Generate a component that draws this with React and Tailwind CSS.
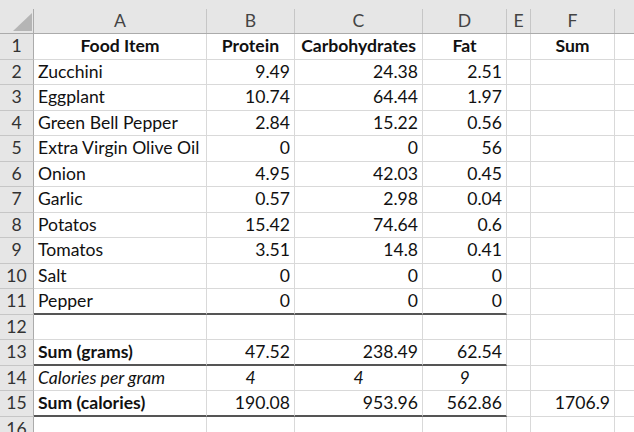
import React from 'react';

const widths = ['w-[34px]', 'w-[173px]', 'w-[88px]', 'w-[128px]', 'w-[84px]', 'w-[24px]', 'w-[84px]', 'w-[40px]'];
const letters = ['A', 'B', 'C', 'D', 'E', 'F', ''];

const rows = [
    { label: 'Food Item', vals: ['Protein', 'Carbohydrates', 'Fat'], f: 'Sum', kind: 'head' },
    { label: 'Zucchini', vals: ['9.49', '24.38', '2.51'] },
    { label: 'Eggplant', vals: ['10.74', '64.44', '1.97'] },
    { label: 'Green Bell Pepper', vals: ['2.84', '15.22', '0.56'] },
    { label: 'Extra Virgin Olive Oil', vals: ['0', '0', '56'] },
    { label: 'Onion', vals: ['4.95', '42.03', '0.45'] },
    { label: 'Garlic', vals: ['0.57', '2.98', '0.04'] },
    { label: 'Potatos', vals: ['15.42', '74.64', '0.6'] },
    { label: 'Tomatos', vals: ['3.51', '14.8', '0.41'] },
    { label: 'Salt', vals: ['0', '0', '0'] },
    { label: 'Pepper', vals: ['0', '0', '0'], thick: true },
    { label: '', vals: ['', '', ''] },
    { label: 'Sum (grams)', vals: ['47.52', '238.49', '62.54'], kind: 'bold', thick: true },
    { label: 'Calories per gram', vals: ['4', '4', '9'], kind: 'italic' },
    { label: 'Sum (calories)', vals: ['190.08', '953.96', '562.86'], f: '1706.9', kind: 'bold', thick: true },
    { label: '', vals: ['', '', ''] },
];

function Cell({ w, className = '', children }) {
    return (
        <div className={`${w} shrink-0 h-full flex items-center border-r border-[#d9d9d9] px-[4px] whitespace-nowrap overflow-hidden ${className}`}>
            {children}
        </div>
    );
}

export default function App() {
    return (
        <div className="w-[634px] h-[432px] overflow-hidden bg-white text-[#111] text-[17.6px]" style={{ fontFamily: 'Lato, "Open Sans", sans-serif' }}>
            <div className="h-[9px] bg-[#e6e6e6]" />
            <div className="flex h-[25px] bg-[#e6e6e6] border-b border-[#ababab] text-[#444]">
                <div className="w-[34px] shrink-0 h-full border-r border-[#ababab] relative">
                    <div className="absolute left-[13px] top-[4px] w-0 h-0 border-l-[19px] border-l-transparent border-b-[18px] border-b-[#b5b5b5]" />
                </div>
                {letters.map((l, i) => (
                    <div key={i} className={`${widths[i + 1]} shrink-0 h-full flex items-center justify-center border-r border-[#c6c6c6]`}>
                        {l}
                    </div>
                ))}
            </div>
            {rows.map((r, i) => {
                const thick = r.thick ? 'border-b-2 border-b-[#555]' : 'border-b border-b-[#d9d9d9]';
                const style = r.kind === 'head' || r.kind === 'bold' ? 'font-bold' : r.kind === 'italic' ? 'italic' : '';
                const numAlign = r.kind === 'head' || r.kind === 'italic' ? 'justify-center' : 'justify-end';
                const numStyle = r.kind === 'head' ? 'font-bold' : r.kind === 'italic' ? 'italic' : '';
                return (
                    <div key={i} className="flex h-[25.5px]">
                        <div className="w-[34px] shrink-0 h-full flex items-center justify-center bg-[#e6e6e6] border-r border-[#ababab] border-b border-b-[#c6c6c6] text-[#333]">
                            {i + 1}
                        </div>
                        <Cell w={widths[1]} className={`${thick} ${style} ${r.kind === 'head' ? 'justify-center' : ''}`}>{r.label}</Cell>
                        {r.vals.map((v, j) => (
                            <Cell key={j} w={widths[j + 2]} className={`${thick} ${numAlign} ${numStyle}`}>{v}</Cell>
                        ))}
                        <Cell w={widths[5]} className="border-b border-b-[#d9d9d9]" />
                        <Cell w={widths[6]} className={`border-b border-b-[#d9d9d9] ${r.kind === 'head' ? 'justify-center font-bold' : 'justify-end'}`}>{r.f}</Cell>
                        <Cell w={widths[7]} className="border-b border-b-[#d9d9d9]" />
                    </div>
                );
            })}
        </div>
    );
}
